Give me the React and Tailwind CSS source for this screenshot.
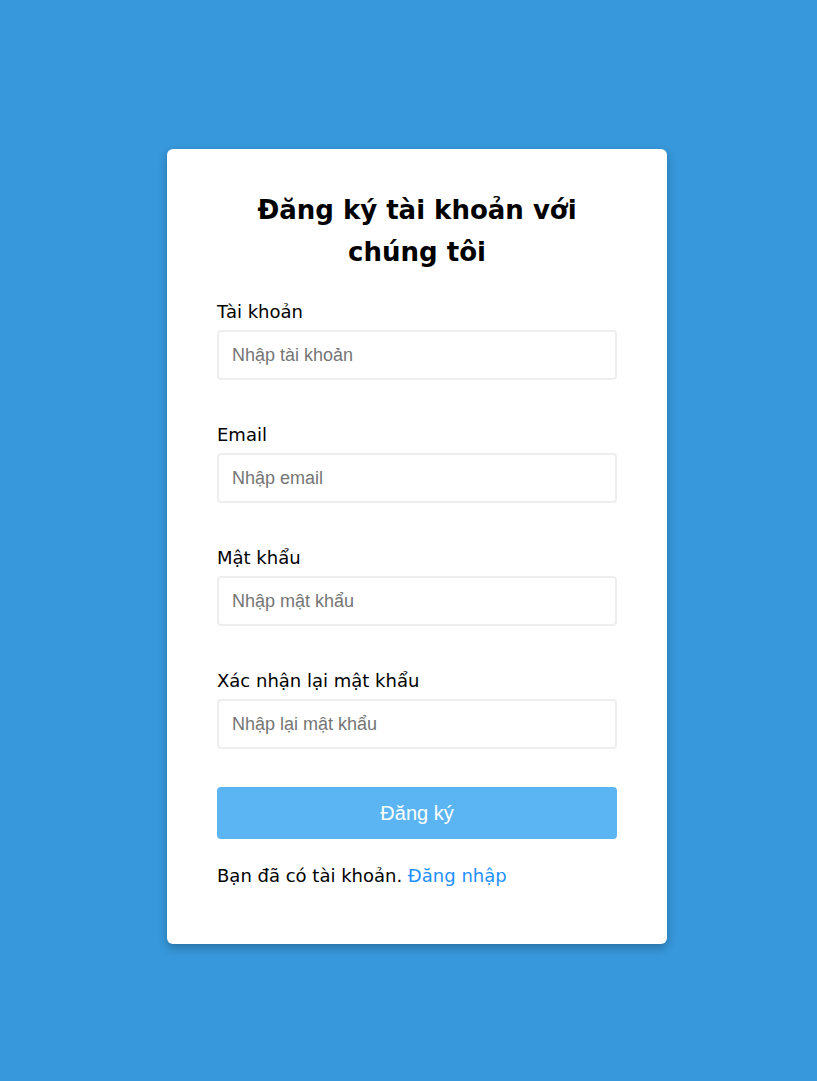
export default function App() {
  const fields = [
    { label: "Tài khoản", ph: "Nhập tài khoản" },
    { label: "Email", ph: "Nhập email" },
    { label: "Mật khẩu", ph: "Nhập mật khẩu" },
    { label: "Xác nhận lại mật khẩu", ph: "Nhập lại mật khẩu" },
  ];
  return (
    <div className="min-h-[1081px] w-full bg-[#3798db] flex justify-center pt-[149px] pl-[17px]" style={{ fontFamily: '"DejaVu Sans", sans-serif' }}>
      <div className="w-[500px] h-[795px] bg-white rounded-[6px] shadow-[0_4px_10px_rgba(0,0,0,0.25)] px-[50px] pt-[40px]">
        <h2 className="text-center text-[26px] leading-[42px] font-bold text-black px-[30px]">Đăng ký tài khoản với chúng tôi</h2>
        <div className="mt-[25px] flex flex-col gap-[41px]">
          {fields.map((f) => (
            <div key={f.label} className="flex flex-col gap-[5px]">
              <label className="text-[18px] leading-[27px] text-black">{f.label}</label>
              <input
                type="text"
                placeholder={f.ph}
                className="h-[50px] w-full border-2 border-[#eeeeee] rounded-[4px] px-[13px] text-[18px] outline-none placeholder:text-[#757575]"
                style={{ fontFamily: '"Liberation Sans", Arial, sans-serif' }}
              />
            </div>
          ))}
        </div>
        <button
          className="mt-[38px] w-full h-[52px] bg-[#5bb5f2] rounded-[4px] text-white text-[20px]"
          style={{ fontFamily: '"Liberation Sans", Arial, sans-serif' }}
        >
          Đăng ký
        </button>
        <p className="mt-[23px] text-[18px] leading-[27px] text-black">
          Bạn đã có tài khoản. <a className="text-[#1e90ff]">Đăng nhập</a>
        </p>
      </div>
    </div>
  );
}
